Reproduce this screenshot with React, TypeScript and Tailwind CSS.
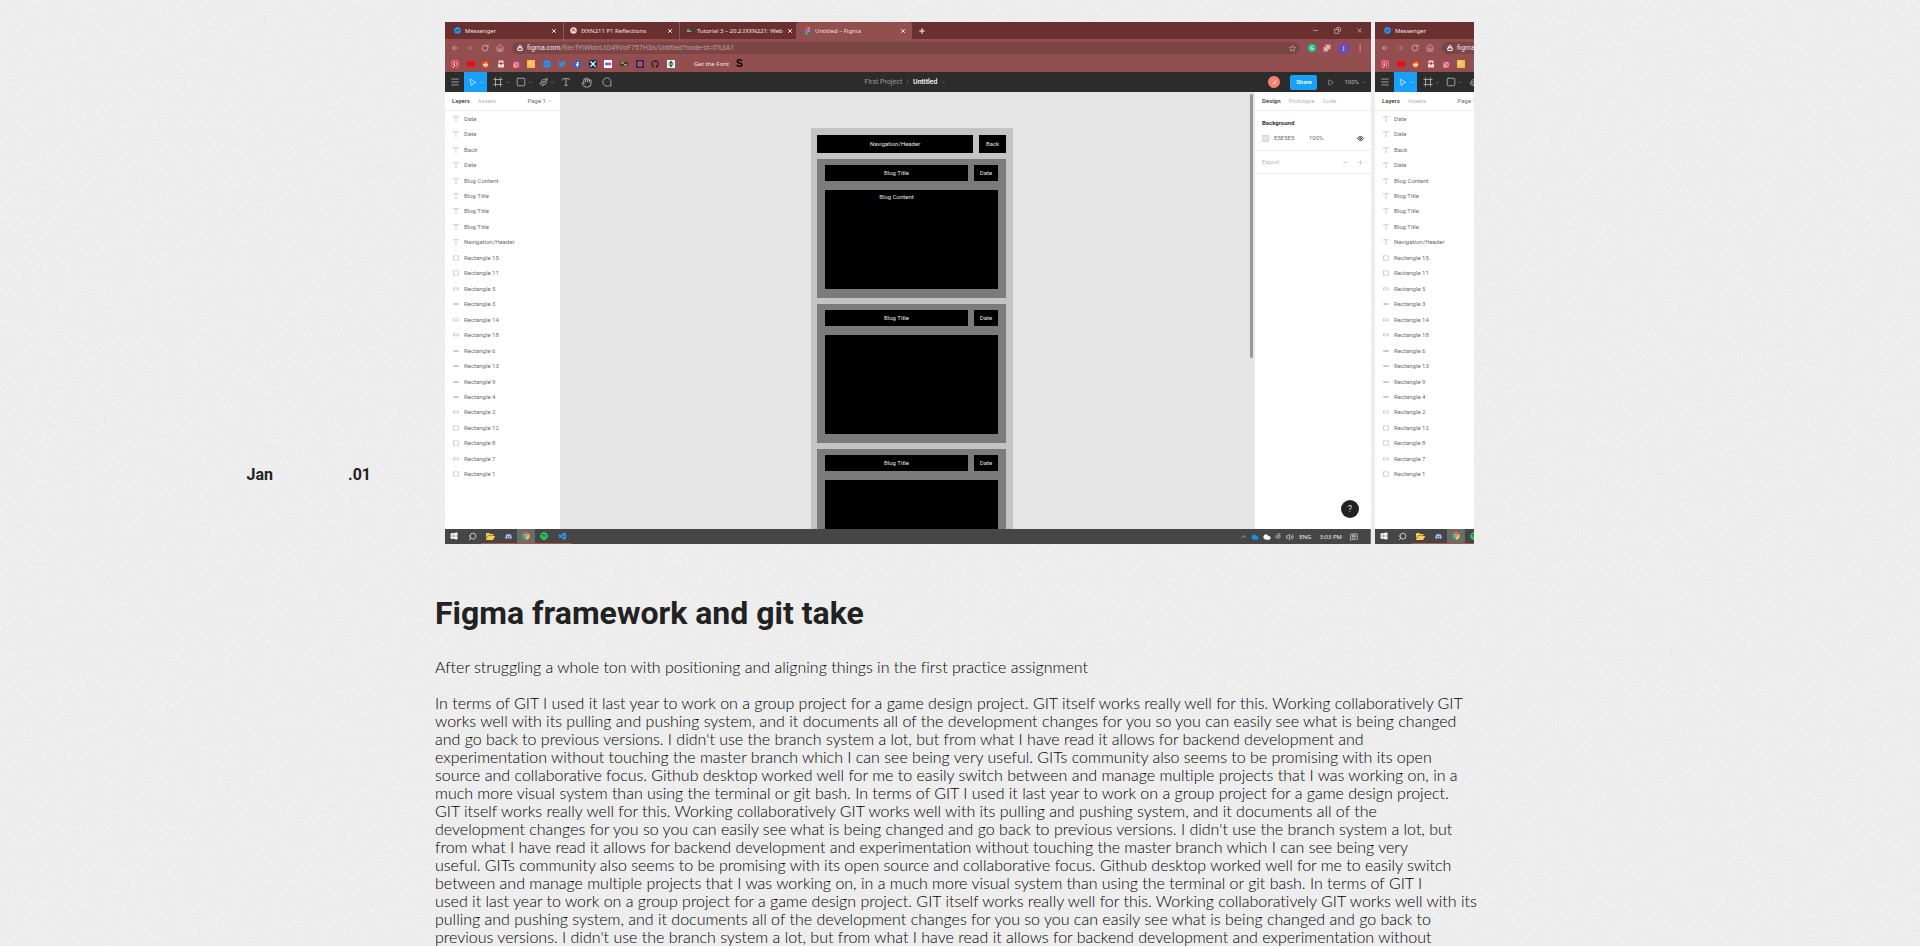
import React from 'react';
import {
  ArrowLeft, ArrowRight, ChevronDown, ChevronUp, Cloud, Copy, Eye, Frame, Hand, Home, Lock, Menu, MessageCircle,
  MessageSquareText, Minus, MoreVertical, MousePointer2, PenTool, Play, Plus, Puzzle, RotateCw, Search, Square, Star,
  Type, Volume2, Wifi, X,
} from 'lucide-react';
import {
  FaDiscord, FaFacebookF, FaFacebookMessenger, FaFolderOpen, FaGithub, FaInstagram, FaPinterest,
  FaRedditAlien, FaSpotify, FaTwitter, FaWindows, FaYoutube,
} from 'react-icons/fa6';
import { VscVscode } from 'react-icons/vsc';

const bodyLines = [
  'In terms of GIT I used it last year to work on a group project for a game design project. GIT itself works really well for this. Working collaboratively GIT',
  'works well with its pulling and pushing system, and it documents all of the development changes for you so you can easily see what is being changed',
  "and go back to previous versions. I didn't use the branch system a lot, but from what I have read it allows for backend development and",
  'experimentation without touching the master branch which I can see being very useful. GITs community also seems to be promising with its open',
  'source and collaborative focus. Github desktop worked well for me to easily switch between and manage multiple projects that I was working on, in a',
  'much more visual system than using the terminal or git bash. In terms of GIT I used it last year to work on a group project for a game design project.',
  'GIT itself works really well for this. Working collaboratively GIT works well with its pulling and pushing system, and it documents all of the',
  "development changes for you so you can easily see what is being changed and go back to previous versions. I didn't use the branch system a lot, but",
  'from what I have read it allows for backend development and experimentation without touching the master branch which I can see being very',
  'useful. GITs community also seems to be promising with its open source and collaborative focus. Github desktop worked well for me to easily switch',
  'between and manage multiple projects that I was working on, in a much more visual system than using the terminal or git bash. In terms of GIT I',
  'used it last year to work on a group project for a game design project. GIT itself works really well for this. Working collaboratively GIT works well with its',
  'pulling and pushing system, and it documents all of the development changes for you so you can easily see what is being changed and go back to',
  "previous versions. I didn't use the branch system a lot, but from what I have read it allows for backend development and experimentation without",
];

type LayerKind = 'text' | 'box' | 'bar' | 'line';
const layers: [LayerKind, string][] = [
  ['text', 'Date'], ['text', 'Date'], ['text', 'Back'], ['text', 'Date'], ['text', 'Blog Content'],
  ['text', 'Blog Title'], ['text', 'Blog Title'], ['text', 'Blog Title'], ['text', 'Navigation/Header'],
  ['box', 'Rectangle 15'], ['box', 'Rectangle 11'], ['bar', 'Rectangle 5'], ['line', 'Rectangle 3'],
  ['bar', 'Rectangle 14'], ['bar', 'Rectangle 18'], ['line', 'Rectangle 6'], ['line', 'Rectangle 13'],
  ['line', 'Rectangle 9'], ['line', 'Rectangle 4'], ['bar', 'Rectangle 2'], ['box', 'Rectangle 12'],
  ['box', 'Rectangle 8'], ['bar', 'Rectangle 7'], ['box', 'Rectangle 1'],
];

function LayerIcon({ kind }: { kind: LayerKind }) {
  return (
    <svg viewBox="0 0 6 6" className="size-[6px] shrink-0" fill="none" stroke="#b4b4b4" strokeWidth="0.6">
      {kind === 'text' && <path d="M0.5 1.6V0.7h5v0.9M3 0.7v4.6M2.2 5.3h1.6" />}
      {kind === 'box' && <rect x="0.4" y="0.9" width="5.2" height="4.2" />}
      {kind === 'bar' && <rect x="0.4" y="1.9" width="5.2" height="2" />}
      {kind === 'line' && <path d="M0.3 3h5.4" strokeWidth="0.9" stroke="#8a8a8a" />}
    </svg>
  );
}

function FigmaMark() {
  return (
    <svg viewBox="0 0 6 9" className="h-[8px]">
      <path d="M3 0H1.500a1.500 1.500 0 0 0 0 3H3z" fill="#f24e1e" />
      <path d="M3 0h1.500a1.500 1.500 0 0 1 0 3H3z" fill="#ff7262" />
      <path d="M3 3H1.500a1.500 1.500 0 0 0 0 3H3z" fill="#a259ff" />
      <circle cx="4.500" cy="4.500" r="1.500" fill="#1abcfe" />
      <path d="M3 6H1.500A1.500 1.500 0 1 0 3 7.500z" fill="#0acf83" />
    </svg>
  );
}

function Tab({ icon, title, active }: { icon: React.ReactNode; title: string; active?: boolean }) {
  return (
    <div
      className={
        active
          ? 'flex w-[116px] items-center gap-1 rounded-t-[3px] bg-[#934f50] pr-[6px] pl-2 text-[#f6dede]'
          : 'flex w-[116px] items-center gap-1 border-r border-[#8a5a5a] pr-[6px] pl-[6px] text-[#f0e4e4] nth-3:border-transparent'
      }
    >
      <span className="flex size-[7px] shrink-0 items-center justify-center">{icon}</span>
      <span className="flex-1 whitespace-nowrap">{title}</span>
      <button aria-label={'Close ' + title} className="shrink-0"><X size={6} strokeWidth={4} /></button>
    </div>
  );
}

const dot = 'flex size-[7px] items-center justify-center';

function Bookmarks() {
  return (
    <div className="flex w-[224px] items-center justify-between">
      <FaPinterest size={8} className="rounded-full bg-white text-[#e60023]" />
      <FaYoutube size={8} className="text-[#ff0000]" />
      <span className={dot + ' rounded-full bg-[#ff4500] text-white'}><FaRedditAlien size={5} /></span>
      <svg viewBox="0 0 8 8" className="size-[8px]"><rect x="1.5" y="0.5" width="5" height="3" fill="#f3dada" /><rect x="1" y="4" width="6" height="3.5" rx="0.5" fill="#f3dada" /><circle cx="4" cy="3.4" r="1.3" fill="#c0392b" /></svg>
      <span className={dot + ' rounded-xs bg-linear-to-tr from-[#fdb045] via-[#e1306c] to-[#833ab4] text-white'}><FaInstagram size={5} /></span>
      <svg viewBox="0 0 8 8" className="size-[8px]"><rect width="8" height="8" fill="#f6b94f" /><path d="M1.5 2.2h3M1.5 4h2M5 5.8l1.6-1.6" stroke="#fff0c8" strokeWidth="0.8" /></svg>
      <FaFacebookMessenger size={8} className="text-[#1e96ff]" />
      <FaTwitter size={8} className="text-[#2c8fd8]" />
      <span className={dot + ' bg-[#2f66c4] text-white'}><FaFacebookF size={5} /></span>
      <svg viewBox="0 0 8 8" className="size-[8px]"><rect width="8" height="8" fill="#10305e" /><path d="M1.2 1.2l5.6 5.6M6.8 1.2L1.2 6.8" stroke="#fff" strokeWidth="1.2" /><rect x="2.8" y="2.8" width="2.4" height="2.4" fill="#fff" /></svg>
      <svg viewBox="0 0 8 8" className="size-[8px]"><rect width="8" height="8" fill="#fff" /><circle cx="2.6" cy="4" r="1.4" fill="#0063dc" /><circle cx="5.5" cy="4" r="1.4" fill="#ff0084" /></svg>
      <svg viewBox="0 0 8 8" className="size-[8px]"><rect x="0" y="2" width="8" height="4" fill="#34432c" /><path d="M1 3.4l3-0.6M4 4.8h3" stroke="#d7e2c8" strokeWidth="0.9" /></svg>
      <svg viewBox="0 0 8 8" className="size-[8px]"><rect width="8" height="8" rx="1" fill="#4a1d4f" /><path d="M4 1.2v5.6M1.2 4h5.6M2 2l4 4M6 2L2 6" stroke="#f1d9f2" strokeWidth="0.7" /><circle cx="4" cy="4" r="1" fill="#4a1d4f" /></svg>
      <FaGithub size={8} className="text-[#2b2024]" />
      <svg viewBox="0 0 8 8" className="size-[8px]"><rect width="8" height="8" fill="#e9f4f1" /><path d="M4 0.8l2.4 2.8H1.6zM4 7.2l2-2.4H2z" fill="#1d3c3a" /><path d="M1.4 4.2h5.2" stroke="#23a17c" strokeWidth="0.9" /></svg>
    </div>
  );
}

function BlogCard({ content }: { content?: string }) {
  return (
    <div className="flex h-[139px] shrink-0 flex-col gap-[9px] bg-[#7b7b7b] px-2 pt-[6px] pb-[9px]">
      <div className="flex h-4 gap-[6px]">
        <span className="flex flex-1 items-center justify-center bg-black">Blog Title</span>
        <span className="flex w-6 items-center justify-center bg-black">Date</span>
      </div>
      <div className="flex-1 bg-black pt-[3px] pr-[30px] text-center leading-2">{content}</div>
    </div>
  );
}

function TaskIcon({ children, open, active }: { children: React.ReactNode; open?: boolean; active?: boolean }) {
  return (
    <span
      className={
        'flex h-full w-[18px] items-center justify-center border-b ' +
        (open ? 'border-[#b0524c] ' : 'border-transparent ') +
        (active ? 'bg-[#6b6b6b]' : '')
      }
    >
      {children}
    </span>
  );
}

function BrowserShot() {
  return (
    <div className="flex h-[522px] w-[926px] shrink-0 flex-col overflow-hidden bg-white font-['Noto_Sans',sans-serif] text-[6px] leading-2">
      <div className="flex h-[17px] shrink-0 bg-[#6a2f2f] pl-[3px]">
        <Tab icon={<FaFacebookMessenger size={7} className="text-[#1e96ff]" />} title="Messenger" />
        <Tab
          icon={<svg viewBox="0 0 8 8" className="size-[7px]"><circle cx="4" cy="4" r="3.7" fill="#f0d6d6" /><path d="M2 2.5c2 0 2.5 1 4 3M2.5 5.5c0-1.500 1.500-2.500 3-2.500" stroke="#9a2b35" strokeWidth="0.9" fill="none" /></svg>}
          title="IXXN211 P1 Reflections"
        />
        <Tab
          icon={<svg viewBox="0 0 8 8" className="size-[7px]"><rect y="1.500" width="8" height="5" fill="#34432c" /><path d="M1 3.2h3M1 5h5" stroke="#d7e2c8" strokeWidth="0.9" /></svg>}
          title="Tutorial 3 – 20.2.IXXN221: Web"
        />
        <Tab icon={<FigmaMark />} title="Untitled – Figma" active />
        <button aria-label="New tab" className="ml-[6px] text-white"><Plus size={8} strokeWidth={3} /></button>
        <div className="ml-auto flex items-center gap-[15px] pr-2 text-[#f0e4e4]">
          <Minus size={7} /><Copy size={7} className="-scale-x-100" /><X size={7} />
        </div>
      </div>

      <div className="flex h-[18px] shrink-0 items-center bg-[#934f50] pl-[6px] text-[#d59a9a]">
        <div className="flex items-center gap-[7px]">
          <ArrowLeft size={8} strokeWidth={3} /><ArrowRight size={8} strokeWidth={3} className="opacity-50" /><RotateCw size={8} strokeWidth={3} /><Home size={8} strokeWidth={3} />
        </div>
        <div className="ml-2 flex h-3 flex-1 items-center rounded-full bg-[#794545] pr-1 pl-[5px]">
          <Lock size={6} strokeWidth={4} className="text-white" />
          <span className="ml-1 flex-1 font-['Roboto',sans-serif] text-[7px] text-[#c79c9c]"><span className="text-[#f3e6e6]">figma.com</span>/file/fYIWkbrLtG49VoF757H3n/Untitled?node-id=0%3A1</span>
          <Star size={7} className="text-[#e0c4c4]" />
        </div>
        <div className="flex items-center gap-[7px] pr-[7px] pl-2">
          <span className="flex size-2 items-center justify-center rounded-full bg-[#15c39a] text-white">G</span>
          <Puzzle size={8} fill="currentColor" className="text-[#eab5b5]" />
          <span className="flex size-[11px] items-center justify-center rounded-full bg-[#6a4bc0] text-white">J</span>
          <MoreVertical size={8} className="text-[#eab5b5]" />
        </div>
      </div>

      <div className="flex h-[15px] shrink-0 items-center bg-[#934f50] pb-px pl-[6px] text-[#f4e2e2]">
        <Bookmarks />
        <span className="ml-[19px] whitespace-nowrap">Get the Font</span>
        <span className="ml-[7px] font-['Liberation_Sans',sans-serif] text-[10px] font-bold text-black">S</span>
      </div>

      <div className="flex h-5 shrink-0 items-center bg-[#2c2c2c] font-['Roboto',sans-serif] text-[#b5b5b5]">
        <div className="flex h-full flex-1 items-center">
          <span className="flex w-[19px] justify-center"><Menu size={10} strokeWidth={2} /></span>
          <span className="flex h-full w-[23px] items-center justify-center gap-[2px] bg-[#18a0fb] text-[#d3edff]"><MousePointer2 size={9} className="rotate-12" /><ChevronDown size={5} /></span>
          <div className="ml-[6px] flex items-center gap-[6px]">
            <span className="flex items-center gap-[2px]"><Frame size={10} /><ChevronDown size={5} /></span>
            <span className="flex items-center gap-[2px]"><Square size={10} /><ChevronDown size={5} /></span>
            <span className="flex items-center gap-[2px]"><PenTool size={9} className="-scale-x-100" /><ChevronDown size={5} /></span>
            <Type size={10} /><Hand size={11} className="ml-1" /><MessageCircle size={10} className="ml-1 -scale-x-100" />
          </div>
        </div>
        <div className="flex items-center gap-1 text-[7px] text-[#9b9b9b]">First Project <span className="opacity-60">/</span> <span className="font-medium text-white">Untitled</span><ChevronDown size={5} /></div>
        <div className="flex h-full flex-1 items-center justify-end gap-[10px] pr-[5px]">
          <span className="flex size-3 items-center justify-center rounded-full bg-[#fa8072] text-white">J</span>
          <button className="h-[15px] w-[27px] rounded-xs bg-[#18a0fb] font-medium text-white">Share</button>
          <Play size={7} />
          <span className="flex items-center gap-[2px]">100%<ChevronDown size={5} /></span>
        </div>
      </div>

      <div className="flex min-h-0 flex-1 font-['Roboto',sans-serif] text-[#6d6d6d]">
        <div className="w-[115px] shrink-0">
          <div className="flex h-[19px] items-center border-b border-[#ededed] pr-2 pl-[7px]">
            <span className="font-medium text-[#333]">Layers</span>
            <span className="ml-2 flex-1 text-[#b5b5b5]">Assets</span>
            <span className="flex items-center gap-[2px]">Page 1<ChevronDown size={4} /></span>
          </div>
          <ul className="grid h-[371px] auto-rows-fr">
            {layers.map(([kind, name], i) => (
              <li key={i} className="flex items-center gap-[5px] pl-[8px]"><LayerIcon kind={kind} />{name}</li>
            ))}
          </ul>
        </div>

        <div className="flex flex-1 justify-between overflow-hidden bg-[#e5e5e5]">
          <div className="mt-9 ml-[251px] flex w-[202px] shrink-0 flex-col gap-[6px] bg-[#c4c4c4] pt-[7px] pr-[7px] pl-[6px] text-[#e2e2e2]">
            <div className="flex h-[18px] shrink-0 gap-[6px]">
              <span className="flex flex-1 items-center justify-center bg-black">Navigation/Header</span>
              <span className="flex w-[27px] items-center justify-center bg-black">Back</span>
            </div>
            <BlogCard content="Blog Content" />
            <BlogCard />
            <BlogCard />
          </div>
          <div className="mt-[2px] mr-[2px] h-[264px] w-[3px] rounded-full bg-[#999]" />
        </div>

        <div className="relative w-[116px] shrink-0">
          <div className="flex h-[19px] items-center gap-2 border-b border-[#ededed] px-[7px] text-[#b5b5b5]">
            <span className="font-medium text-[#333]">Design</span><span>Prototype</span><span>Code</span>
          </div>
          <div className="flex h-10 flex-col justify-between border-b border-[#ededed] px-[7px] pt-2 pb-2">
            <span className="font-bold text-[#333]">Background</span>
            <div className="flex items-center">
              <span className="size-[7px] border border-[#d5d5d5] bg-[#e5e5e5]" />
              <span className="ml-[5px] w-[35px]">E5E5E5</span><span className="flex-1">100%</span>
              <Eye size={7} strokeWidth={3} className="text-[#333]" />
            </div>
          </div>
          <div className="flex h-[23px] items-center gap-2 border-b border-[#ededed] px-[7px] text-[#b5b5b5]">
            <span className="flex-1">Export</span><Minus size={7} /><Plus size={7} />
          </div>
          <button aria-label="Help" className="absolute right-3 bottom-[11px] flex size-[18px] items-center justify-center rounded-full bg-[#222] text-[9px] text-[#ddd]">?</button>
        </div>
      </div>

      <div className="flex h-[15px] shrink-0 items-center justify-between bg-[#464646] text-[#eee]">
        <div className="flex h-full items-center">
          <TaskIcon><FaWindows size={8} className="text-white" /></TaskIcon>
          <TaskIcon><Search size={9} className="-scale-x-100" /></TaskIcon>
          <TaskIcon open><FaFolderOpen size={9} className="text-[#f5cf55]" /></TaskIcon>
          <TaskIcon open><FaDiscord size={7} className="text-[#a9bdf8]" /></TaskIcon>
          <TaskIcon open active>
            <svg viewBox="0 0 8 8" className="size-[8px]"><circle cx="4" cy="4" r="3.800" fill="#e8c13a" /><path d="M4 4L0.700 2.100A3.800 3.800 0 0 1 7.300 2.100z" fill="#de5246" /><path d="M4 4L0.700 2.100A3.800 3.800 0 0 0 4 7.800z" fill="#1da362" /><circle cx="4" cy="4" r="1.700" fill="#fff" /><circle cx="4" cy="4" r="1.300" fill="#4c8bf5" /></svg>
          </TaskIcon>
          <TaskIcon open><FaSpotify size={8} className="text-[#1ed760]" /></TaskIcon>
          <TaskIcon open><VscVscode size={9} className="text-[#2a9df4]" /></TaskIcon>
        </div>
        <div className="flex h-full items-center gap-1 border-r border-[#777] pr-3">
          <ChevronUp size={7} />
          <Cloud size={8} fill="currentColor" className="text-[#1a8fe3]" />
          <Cloud size={8} fill="currentColor" className="text-white" />
          <Wifi size={7} className="-rotate-45" /><Volume2 size={8} />
          <span className="ml-px">ENG</span><span className="mx-1 whitespace-nowrap">3:03 PM</span>
          <MessageSquareText size={8} />
        </div>
      </div>
    </div>
  );
}

export default function App() {
  return (
    <div className="relative isolate min-h-screen overflow-hidden bg-[#f0f0f0] text-[#222]">
      <svg aria-hidden="true" className="absolute inset-0 -z-10 h-full w-full opacity-10">
        <filter id="grain"><feTurbulence type="fractalNoise" baseFrequency="0.45" numOctaves="3" stitchTiles="stitch" /><feColorMatrix type="saturate" values="0" /></filter>
        <rect width="100%" height="100%" filter="url(#grain)" />
      </svg>
      <main className="grid grid-cols-[1fr_1050px_1fr] pt-[22px]">
        <time dateTime="01-01" className="flex items-end justify-end gap-[75px] pr-16 pb-[57px] font-['Roboto',sans-serif] text-base font-bold">
          <span>Jan</span><span>.01</span>
        </time>
        <figure aria-label="Figma wireframe" className="mr-[11px] ml-[10px] flex gap-1 overflow-hidden">
          <BrowserShot />
          <BrowserShot />
        </figure>
        <article className="col-start-2 font-['Lato',sans-serif] text-base leading-[18px] font-light text-black [font-variant-ligatures:none]">
          <h1 className="mt-[49px] font-['Roboto',sans-serif] text-[32px] leading-10 font-bold text-[#222]">Figma framework and git take</h1>
          <p className="mt-[25px]">After struggling a whole ton with positioning and aligning things in the first practice assignment</p>
          <p className="mt-[18px]">
            {bodyLines.map((line, i) => <span key={i} className="block whitespace-nowrap">{line} </span>)}
          </p>
        </article>
      </main>
    </div>
  );
}
